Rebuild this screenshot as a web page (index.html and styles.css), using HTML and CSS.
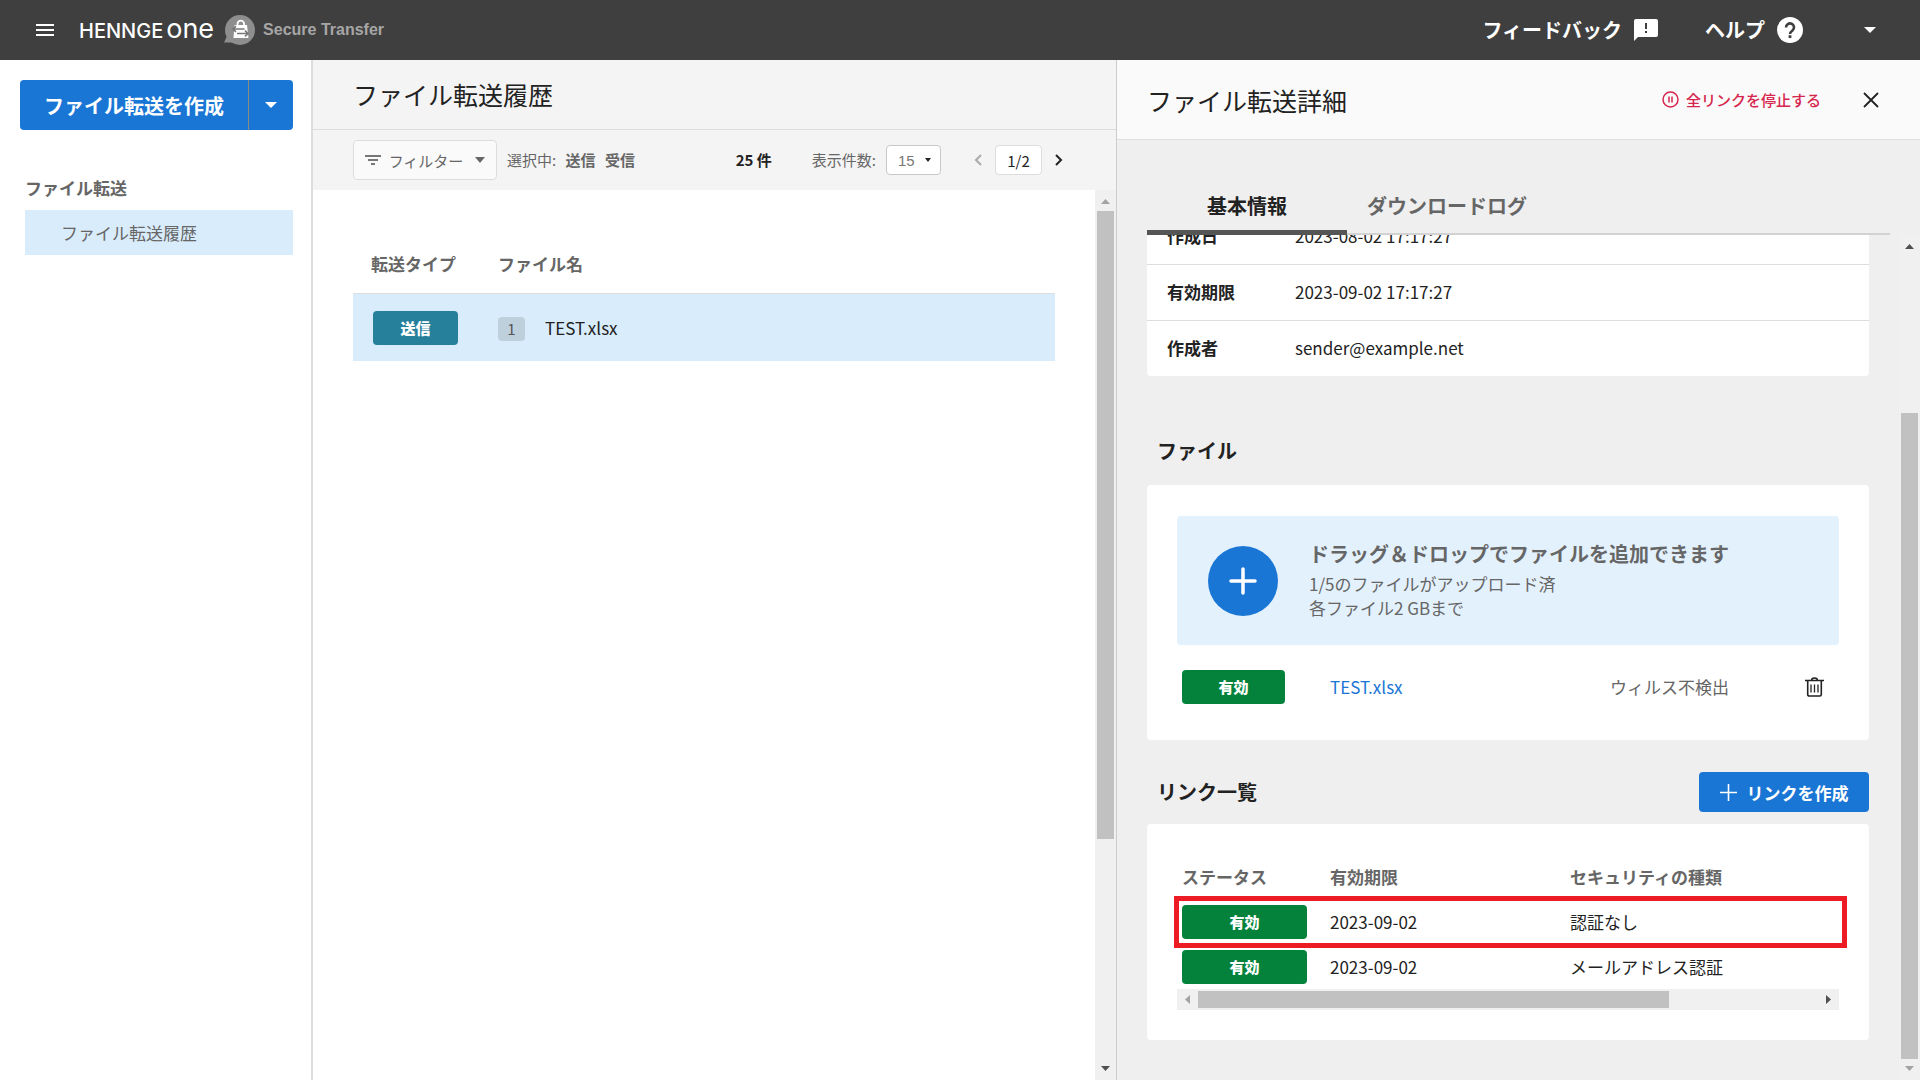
FILE: index.html
```html
<!DOCTYPE html>
<html lang="ja">
<head>
    <meta charset="UTF-8">
    <meta name="viewport" content="width=device-width, initial-scale=1.0">
    <title>HENNGE One Secure Transfer</title>
    <link rel="stylesheet" href="styles.css">
</head>
<body>
    <header class="topbar">
        <button type="button" class="icon-button menu-button" aria-label="メニュー">
            <svg width="18" height="12" viewBox="0 0 18 12"><path d="M0 1h18M0 6h18M0 11h18" stroke="#fff" stroke-width="2"/></svg>
        </button>
        <a href="#" class="brand"><span class="brand-name">HENNGE</span><span class="brand-one">one</span></a>
        <svg class="brand-icon" width="32" height="32" viewBox="0 0 32 32">
            <circle cx="16" cy="16" r="15" fill="#8e8e8e"/>
            <path d="M3 22L0 28.500h11z" fill="#8e8e8e"/>
            <path d="M13.500 12V10a3.300 3.300 0 0 1 6.600 0V12" fill="none" stroke="#fff" stroke-width="1.800"/>
            <path d="M10.500 11h12.500l1.500 13h-15z" fill="#fff"/>
            <path d="M20.500 15H9M12 12.200L9 15l3 2.800M13 19.500h11M21 16.700l3 2.800-3 2.800" fill="none" stroke="#777" stroke-width="1.600"/>
        </svg>
        <span class="product">Secure Transfer</span>
        <nav class="topbar-nav">
            <a href="#" class="feedback">フィードバック
                <svg width="24" height="22" viewBox="0 0 24 22"><path fill="#fff" fill-rule="evenodd" d="M2 0h20a2 2 0 0 1 2 2v14a2 2 0 0 1-2 2H4l-4 4V2a2 2 0 0 1 2-2zM11 4v6h2V4zM11 12v2h2v-2z"/></svg>
            </a>
            <a href="#" class="help">ヘルプ
                <svg width="26" height="26" viewBox="0 0 26 26"><circle cx="13" cy="13" r="13" fill="#fff"/><path d="M9 10.500a4 4 0 1 1 6.500 3c-1.500 1.200-2.500 1.700-2.500 3.500" fill="none" stroke="#3f3f3f" stroke-width="2.600"/><path d="M11.600 18.200h2.800v2.800h-2.800z" fill="#3f3f3f"/></svg>
            </a>
            <button type="button" class="icon-button" aria-label="アカウント">
                <svg width="12" height="6" viewBox="0 0 12 6"><path d="M0 0h12L6 6z" fill="#fff"/></svg>
            </button>
        </nav>
    </header>

    <div class="layout">
        <aside class="sidebar">
            <div class="create">
                <button type="button" class="create-main">ファイル転送を作成</button>
                <button type="button" class="create-more" aria-label="その他の作成方法">
                    <svg width="12" height="6" viewBox="0 0 12 6"><path d="M0 0h12L6 6z" fill="#fff"/></svg>
                </button>
            </div>
            <nav class="side-nav">
                <h2>ファイル転送</h2>
                <a href="#" class="side-link">ファイル転送履歴</a>
            </nav>
        </aside>

        <main class="history">
            <h1 class="history-title">ファイル転送履歴</h1>
            <div class="toolbar">
                <button type="button" class="filter">
                    <svg width="16" height="10" viewBox="0 0 16 10"><path d="M0 1h16M3 5h10M6 9h4" stroke="#777" stroke-width="2"/></svg>
                    <span>フィルター</span>
                    <svg width="10" height="6" viewBox="0 0 10 6"><path d="M0 0h10L5 6z" fill="#666"/></svg>
                </button>
                <p class="selected">選択中: <b>送信</b> <b>受信</b></p>
                <p class="total">25 件</p>
                <label for="page-size" class="size-label">表示件数:</label>
                <span class="size-box">
                    <select id="page-size">
                        <option>15</option>
                    </select>
                    <svg width="6" height="4" viewBox="0 0 6 4"><path d="M0 0h6L3 4z" fill="#222"/></svg>
                </span>
                <div class="pager">
                    <button type="button" class="icon-button" aria-label="前へ" disabled>
                        <svg width="8" height="12" viewBox="0 0 8 12"><path d="M7 1L2 6l5 5" fill="none" stroke="#aaa" stroke-width="2"/></svg>
                    </button>
                    <input type="text" class="page" value="1/2" aria-label="ページ">
                    <button type="button" class="icon-button" aria-label="次へ">
                        <svg width="8" height="12" viewBox="0 0 8 12"><path d="M1 1l5 5-5 5" fill="none" stroke="#222" stroke-width="2"/></svg>
                    </button>
                </div>
            </div>
            <div class="history-body">
                <div class="history-content">
                    <table class="history-table">
                        <thead>
                            <tr><th class="col-type">転送タイプ</th><th>ファイル名</th></tr>
                        </thead>
                        <tbody>
                            <tr>
                                <td><span class="badge badge-send">送信</span></td>
                                <td><span class="count">1</span><span class="file-name">TEST.xlsx</span></td>
                            </tr>
                        </tbody>
                    </table>
                </div>
                <div class="scrollbar history-scroll">
                    <svg width="9" height="5" viewBox="0 0 9 5"><path d="M0 5h9L4.500 0z" fill="#a3a3a3"/></svg>
                    <div class="track"><div class="thumb"></div></div>
                    <svg width="9" height="5" viewBox="0 0 9 5"><path d="M0 0h9L4.500 5z" fill="#505050"/></svg>
                </div>
            </div>
        </main>

        <section class="detail">
            <header class="detail-header">
                <h2>ファイル転送詳細</h2>
                <button type="button" class="stop-all">
                    <svg width="17" height="17" viewBox="0 0 17 17"><circle cx="8.500" cy="8.500" r="7.500" fill="none" stroke="#d6264f" stroke-width="1.500"/><path d="M7 5.500v6M10 5.500v6" stroke="#d6264f" stroke-width="1.500"/></svg>
                    全リンクを停止する
                </button>
                <button type="button" class="icon-button" aria-label="閉じる">
                    <svg width="16" height="16" viewBox="0 0 16 16"><path d="M1 1l14 14M15 1L1 15" stroke="#222" stroke-width="1.800"/></svg>
                </button>
            </header>
            <div class="tabs" role="tablist">
                <button type="button" class="tab active" role="tab">基本情報</button>
                <button type="button" class="tab" role="tab">ダウンロードログ</button>
            </div>
            <div class="detail-body">
                <div class="detail-content">
                    <table class="card info">
                        <tr><th>作成日</th><td>2023-08-02 17:17:27</td></tr>
                        <tr><th>有効期限</th><td>2023-09-02 17:17:27</td></tr>
                        <tr><th>作成者</th><td>sender@example.net</td></tr>
                    </table>

                    <h3 class="files-heading">ファイル</h3>
                    <div class="card files">
                        <div class="dropzone">
                            <button type="button" class="add-file" aria-label="ファイルを追加">
                                <svg width="28" height="28" viewBox="0 0 28 28"><path d="M14 2v24M2 14h24" stroke="#fff" stroke-width="3.500" stroke-linecap="round"/></svg>
                            </button>
                            <div>
                                <p class="drop-title">ドラッグ＆ドロップでファイルを追加できます</p>
                                <p>1/5のファイルがアップロード済</p>
                                <p>各ファイル2 GBまで</p>
                            </div>
                        </div>
                        <div class="file-row">
                            <span class="badge">有効</span>
                            <a href="#">TEST.xlsx</a>
                            <span class="virus">ウィルス不検出</span>
                            <button type="button" class="icon-button" aria-label="削除">
                                <svg width="19" height="20" viewBox="0 0 19 20"><path d="M0 3.500h19M6.500 3.500c0-3.500 6-3.500 6 0" fill="none" stroke="#222" stroke-width="1.500"/><path d="M2.700 3.500v14a1.500 1.500 0 0 0 1.500 1.500h10.600a1.500 1.500 0 0 0 1.500-1.500v-14" fill="none" stroke="#222" stroke-width="1.600"/><path d="M6 7.500v8M9.500 7.500v8M13 7.500v8" stroke="#222" stroke-width="1.300"/></svg>
                            </button>
                        </div>
                    </div>

                    <div class="links-heading">
                        <h3>リンク一覧</h3>
                        <button type="button" class="create-link">
                            <svg width="17" height="17" viewBox="0 0 17 17"><path d="M8.500 0v17M0 8.500h17" stroke="#fff" stroke-width="1.600"/></svg>
                            リンクを作成
                        </button>
                    </div>
                    <div class="card links">
                        <table class="links-table">
                            <thead>
                                <tr><th class="col-status">ステータス</th><th class="col-expiry">有効期限</th><th>セキュリティの種類</th></tr>
                            </thead>
                            <tbody>
                                <tr><td><span class="badge">有効</span></td><td>2023-09-02</td><td>認証なし</td></tr>
                                <tr><td><span class="badge">有効</span></td><td>2023-09-02</td><td>メールアドレス認証</td></tr>
                            </tbody>
                        </table>
                        <div class="highlight"></div>
                        <div class="scrollbar links-scroll">
                            <svg width="5" height="9" viewBox="0 0 5 9"><path d="M5 0v9L0 4.500z" fill="#a3a3a3"/></svg>
                            <div class="track"><div class="thumb"></div></div>
                            <svg width="5" height="9" viewBox="0 0 5 9"><path d="M0 0v9l5-4.500z" fill="#505050"/></svg>
                        </div>
                    </div>
                </div>
                <div class="scrollbar detail-scroll">
                    <svg width="9" height="5" viewBox="0 0 9 5"><path d="M0 5h9L4.500 0z" fill="#505050"/></svg>
                    <div class="track"><div class="thumb"></div></div>
                    <svg width="9" height="5" viewBox="0 0 9 5"><path d="M0 0h9L4.500 5z" fill="#a3a3a3"/></svg>
                </div>
            </div>
        </section>
    </div>
</body>
</html>
```
FILE: styles.css
```css
* {
    box-sizing: border-box;
}

body {
    display: flex;
    flex-direction: column;
    height: 100vh;
    margin: 0;
    overflow: hidden;
    font-family: "Noto Sans CJK JP", sans-serif;
    font-size: 17px;
    line-height: 24px;
    color: #222222;
    background-color: #ffffff;
}

h1, h2, h3, p {
    margin: 0;
}

a {
    color: inherit;
    text-decoration: none;
}

svg {
    display: block;
    flex-shrink: 0;
}

button, input, select {
    font-family: inherit;
    font-size: 15px;
    color: inherit;
}

button {
    display: flex;
    align-items: center;
    justify-content: center;
    padding: 0;
    border: none;
    background: none;
    cursor: pointer;
}

table {
    width: 100%;
    border-collapse: collapse;
}

th, td {
    padding: 0;
    text-align: left;
}

.icon-button {
    padding: 8px;
}

/* Top bar */
.topbar {
    display: flex;
    align-items: center;
    height: 60px;
    flex-shrink: 0;
    padding: 0 36px 0 28px;
    background-color: #3f3f3f;
    color: #ffffff;
}

.brand {
    display: flex;
    align-items: baseline;
    gap: 3px;
    margin-left: 17px;
    font-family: Inter, sans-serif;
}

.brand-name {
    font-size: 20px;
    font-weight: 500;
}

.brand-one {
    font-size: 27px;
}

.brand-icon {
    margin-left: 10px;
}

.product {
    margin-left: 7px;
    font-family: "Liberation Sans", sans-serif;
    font-size: 16px;
    font-weight: bold;
    color: #a6a6a6;
}

.topbar-nav {
    display: flex;
    align-items: center;
    margin-left: auto;
    font-size: 20px;
    font-weight: bold;
}

.feedback, .help {
    display: flex;
    align-items: center;
    gap: 12px;
}

.help {
    margin: 0 53px 0 47px;
}

.layout {
    display: grid;
    grid-template-columns: 313px 803fr 804fr;
    flex: 1;
    min-height: 0;
}

/* Sidebar */
.sidebar {
    padding: 20px 18px 0 20px;
    border-right: 2px solid #dddddd;
}

.create {
    display: flex;
    height: 50px;
    border-radius: 4px;
    background-color: #1976d5;
    color: #ffffff;
}

.create-main {
    flex: 1;
    font-size: 20px;
    font-weight: bold;
}

.create-more {
    width: 45px;
    border-left: 1px solid #8c8c80;
}

.side-nav {
    margin: 46px 0 0 5px;
    color: #666666;
}

.side-nav h2 {
    font-size: 17px;
    font-weight: bold;
}

.side-link {
    display: flex;
    align-items: center;
    height: 45px;
    margin-top: 10px;
    padding-left: 36px;
    background-color: #d9ecfb;
}

/* History */
.history {
    display: flex;
    flex-direction: column;
    min-width: 0;
}

.history-title {
    height: 70px;
    padding: 14px 40px 0;
    border-bottom: 1px solid #dddddd;
    background-color: #f4f4f4;
    font-size: 25px;
    font-weight: 400;
    line-height: 40px;
}

.toolbar {
    display: flex;
    align-items: center;
    height: 60px;
    padding: 0 45px 0 40px;
    background-color: #f4f4f4;
    font-size: 15px;
    color: #666666;
}

.filter {
    gap: 8px;
    width: 144px;
    height: 40px;
    border: 1px solid #dddddd;
    border-radius: 4px;
    background-color: #fafafa;
}

.filter span {
    margin-right: 4px;
}

.selected {
    margin-left: 10px;
}

.selected b {
    margin-left: 6px;
}

.total {
    margin-left: auto;
    font-weight: bold;
    color: #222222;
}

.size-label {
    margin: 0 10px 0 40px;
}

.size-box {
    display: flex;
    align-items: center;
    width: 55px;
    height: 30px;
    padding-right: 9px;
    border: 1px solid #c8c8c8;
    border-radius: 4px;
    background-color: #ffffff;
}

.size-box select {
    flex: 1;
    min-width: 0;
    padding: 0 0 0 11px;
    appearance: none;
    border: none;
    background: none;
    font-family: "Liberation Sans", sans-serif;
    color: #777777;
}

.pager {
    display: flex;
    align-items: center;
    gap: 5px;
    margin-left: 25px;
}

.page {
    width: 47px;
    height: 30px;
    padding: 0;
    border: 1px solid #dddddd;
    border-radius: 4px;
    background-color: #ffffff;
    text-align: center;
    color: #222222;
}

.history-body {
    display: flex;
    flex: 1;
    min-height: 0;
}

.history-content {
    flex: 1;
    padding: 44px 40px 0;
}

.history-table th {
    height: 59px;
    padding: 2px 0 0 18px;
    font-weight: bold;
    color: #666666;
}

.history-table td {
    height: 68px;
    padding: 2px 0 0 20px;
    border-top: 1px solid #dddddd;
    background-color: #d9ecfb;
}

.history-table th + th, .history-table td + td {
    padding-left: 0;
}

.history-table .col-type {
    width: 145px;
}

.badge {
    display: flex;
    align-items: center;
    justify-content: center;
    height: 34px;
    border-radius: 4px;
    background-color: #04823c;
    color: #ffffff;
    font-size: 15px;
    font-weight: 900;
}

.badge-send {
    width: 85px;
    background-color: #26809b;
}

.count {
    display: inline-block;
    width: 27px;
    margin-right: 20px;
    border-radius: 4px;
    background-color: #bfd0dd;
    font-size: 15px;
    text-align: center;
    color: #555555;
}

/* Scrollbars */
.scrollbar {
    display: flex;
    flex-direction: column;
    align-items: center;
    flex-shrink: 0;
    gap: 7px;
    width: 21px;
    padding: 9px 2px;
    background-color: #f0f0f0;
}

.track {
    flex: 1;
    width: 17px;
}

.thumb {
    width: 100%;
    height: 100%;
    background-color: #c1c1c1;
}

.history-scroll .thumb {
    height: 74%;
}

.detail-scroll .track {
    display: flex;
    padding-top: 157px;
}

.links-scroll {
    flex-direction: row;
    width: auto;
    height: 21px;
    padding: 2px 8px;
    gap: 8px;
}

.links-scroll .track {
    height: 17px;
}

.links-scroll .thumb {
    width: 76%;
}

/* Detail */
.detail {
    display: flex;
    flex-direction: column;
    min-width: 0;
    min-height: 0;
    border-left: 1px solid #cccccc;
    background-color: #efefef;
}

.detail-header {
    display: flex;
    align-items: center;
    height: 80px;
    flex-shrink: 0;
    padding: 0 33px 0 30px;
    border-bottom: 1px solid #dddddd;
    background-color: #fafafa;
}

.detail-header h2 {
    margin-right: auto;
    font-size: 25px;
    font-weight: 400;
}

.stop-all {
    gap: 7px;
    margin-right: 34px;
    font-weight: 500;
    color: #d6264f;
}

.tabs {
    display: flex;
    height: 95px;
    flex-shrink: 0;
    margin: 0 30px;
    padding-top: 40px;
    background: linear-gradient(#d2d2d2, #d2d2d2) bottom / 100% 2px no-repeat;
}

.tab {
    width: 200px;
    font-size: 20px;
    font-weight: bold;
    color: #666666;
    border-bottom: 5px solid transparent;
}

.tab.active {
    color: #222222;
    border-bottom-color: #555555;
}

.detail-body {
    display: flex;
    flex: 1;
    min-height: 0;
}

/* The panel is shown scrolled to its end */
.detail-content {
    display: flex;
    flex-direction: column;
    justify-content: flex-end;
    flex: 1;
    min-width: 0;
    overflow: hidden;
    padding: 0 30px 40px;
}

.card {
    flex-shrink: 0;
    border-radius: 4px;
    background-color: #ffffff;
}

.info th {
    width: 148px;
    height: 56px;
    padding-left: 20px;
    font-weight: bold;
}

.info tr + tr {
    border-top: 1px solid #dddddd;
}

h3 {
    font-size: 20px;
    font-weight: bold;
}

.files-heading {
    margin: 63px 0 22px;
    padding-left: 10px;
}

.files {
    padding: 31px 30px 35px;
}

.dropzone {
    display: flex;
    align-items: center;
    gap: 31px;
    height: 129px;
    padding: 0 31px;
    border-radius: 4px;
    background-color: #e3f1fd;
    color: #666666;
}

.add-file {
    width: 70px;
    height: 70px;
    border-radius: 50%;
    background-color: #1976d5;
}

.drop-title {
    margin-bottom: 6px;
    font-size: 20px;
    font-weight: bold;
}

.file-row {
    display: grid;
    grid-template-columns: 103px 1fr 187px 35px;
    align-items: center;
    margin-top: 24px;
    padding: 0 7px 0 5px;
}

.file-row a {
    padding-left: 45px;
    color: #1976d5;
}

.virus {
    color: #666666;
}

.links-heading {
    display: flex;
    align-items: center;
    justify-content: space-between;
    margin: 32px 0 12px;
    padding-left: 10px;
}

.create-link {
    gap: 10px;
    width: 170px;
    height: 40px;
    border-radius: 4px;
    background-color: #1976d5;
    color: #ffffff;
    font-size: 17px;
    font-weight: bold;
}

.links {
    position: relative;
    padding: 30px;
}

.links-table th, .links-table td {
    height: 45px;
}

.links-table th {
    font-weight: bold;
    color: #666666;
}

.links-table th:first-child, .links-table td:first-child {
    padding-left: 5px;
}

.links-table .badge {
    width: 125px;
}

.col-status {
    width: 153px;
}

.col-expiry {
    width: 240px;
}

.highlight {
    position: absolute;
    top: 72px;
    left: 27px;
    right: 22px;
    height: 52px;
    border: 5px solid #ed1c24;
}
```
